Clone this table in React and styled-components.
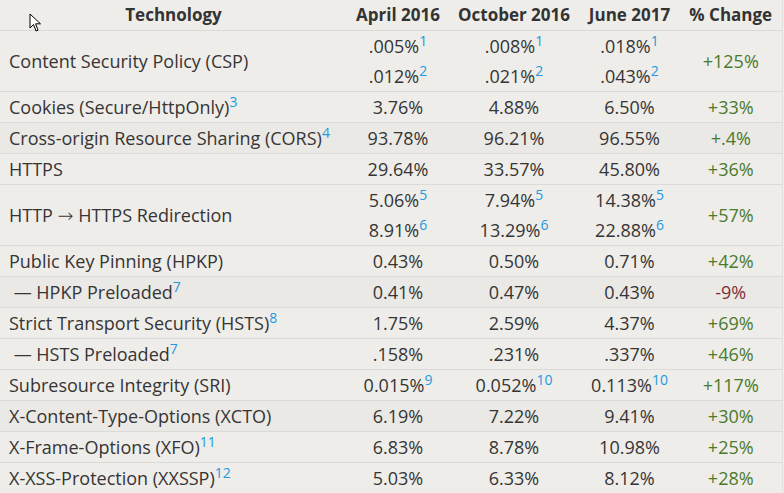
import styled, { createGlobalStyle } from "styled-components";

const GlobalStyle = createGlobalStyle`
  html, body {
    margin: 0;
    padding: 0;
    background: #efede9;
  }
  body {
    font-family: "Open Sans", "Liberation Sans", sans-serif;
    color: #353535;
  }
`;

const Page = styled.div`
  position: relative;
  width: 784px;
  height: 493px;
  overflow: hidden;
`;

const Table = styled.table`
  width: 782px;
  border-collapse: collapse;
  table-layout: fixed;
  font-size: 18px;
  border-right: 1px solid #e3e1dd;

  td, th {
    padding: 0;
  }
`;

const Th = styled.th`
  font-weight: 700;
  font-size: 17px;
  text-align: center;
  line-height: 30px;
  height: 30px;
  color: #333;
  white-space: nowrap;
  border-bottom: 1px solid #dcdad6;
`;

const Row = styled.tr`
  border-bottom: 1px solid #dcdad6;
  background: ${(p) => (p.$dark ? "#ebe9e5" : "transparent")};
`;

const Name = styled.td`
  text-align: left;
  padding-left: 9px !important;
  line-height: 30px;
  height: 30px;
  white-space: nowrap;
`;

const Arrow = styled.span`
  font-family: "DejaVu Sans", sans-serif;
  font-size: 19px;
  font-weight: 300;
`;

const Val = styled.td`
  text-align: center;
  line-height: 30px;
  white-space: nowrap;
`;

const Line = styled.div`
  line-height: 30px;
  height: 30px;
`;

const Change = styled.td`
  text-align: center;
  line-height: 30px;
  color: ${(p) => (p.$neg ? "#7e2f35" : "#4a7a2c")};
`;

const Sup = styled.sup`
  color: #2299e0;
  font-size: 14px;
  line-height: 0;
  vertical-align: 0;
  position: relative;
  top: -7px;
`;

const Cursor = styled.svg`
  position: absolute;
  left: 29px;
  top: 13px;
`;

const cols = [347, 102, 130, 101, 102];

const rows = [
  {
    name: "Content Security Policy (CSP)",
    vals: [
      [[".005%", "1"], [".012%", "2"]],
      [[".008%", "1"], [".021%", "2"]],
      [[".018%", "1"], [".043%", "2"]],
    ],
    change: "+125%",
  },
  { name: "Cookies (Secure/HttpOnly)", note: "3", vals: [[["3.76%"]], [["4.88%"]], [["6.50%"]]], change: "+33%" },
  { name: "Cross-origin Resource Sharing (CORS)", note: "4", vals: [[["93.78%"]], [["96.21%"]], [["96.55%"]]], change: "+.4%" },
  { name: "HTTPS", vals: [[["29.64%"]], [["33.57%"]], [["45.80%"]]], change: "+36%" },
  {
    name: (
      <>
        HTTP <Arrow>{"\u2192"}</Arrow> HTTPS Redirection
      </>
    ),
    vals: [
      [["5.06%", "5"], ["8.91%", "6"]],
      [["7.94%", "5"], ["13.29%", "6"]],
      [["14.38%", "5"], ["22.88%", "6"]],
    ],
    change: "+57%",
  },
  { name: "Public Key Pinning (HPKP)", vals: [[["0.43%"]], [["0.50%"]], [["0.71%"]]], change: "+42%" },
  { name: "\u00a0\u2014 HPKP Preloaded", note: "7", vals: [[["0.41%"]], [["0.47%"]], [["0.43%"]]], change: "-9%", neg: true },
  { name: "Strict Transport Security (HSTS)", note: "8", vals: [[["1.75%"]], [["2.59%"]], [["4.37%"]]], change: "+69%" },
  { name: "\u00a0\u2014 HSTS Preloaded", note: "7", vals: [[[".158%"]], [[".231%"]], [[".337%"]]], change: "+46%" },
  { name: "Subresource Integrity (SRI)", vals: [[["0.015%", "9"]], [["0.052%", "10"]], [["0.113%", "10"]]], change: "+117%" },
  { name: "X-Content-Type-Options (XCTO)", vals: [[["6.19%"]], [["7.22%"]], [["9.41%"]]], change: "+30%" },
  { name: "X-Frame-Options (XFO)", note: "11", vals: [[["6.83%"]], [["8.78%"]], [["10.98%"]]], change: "+25%" },
  { name: "X-XSS-Protection (XXSSP)", note: "12", vals: [[["5.03%"]], [["6.33%"]], [["8.12%"]]], change: "+28%" },
];

const Cell = ({ lines }) => (
  <Val>
    {lines.length > 1 ? (
      lines.map(([v, n], i) => (
        <Line key={i}>
          {v}
          {n && <Sup>{n}</Sup>}
        </Line>
      ))
    ) : (
      <>
        {lines[0][0]}
        {lines[0][1] && <Sup>{lines[0][1]}</Sup>}
      </>
    )}
  </Val>
);

export default function App() {
  return (
    <Page>
      <GlobalStyle />
      <Table>
        <colgroup>
          {cols.map((w, i) => (
            <col key={i} style={{ width: w }} />
          ))}
        </colgroup>
        <thead>
          <tr>
            <Th>Technology</Th>
            <Th>April 2016</Th>
            <Th>October 2016</Th>
            <Th>June 2017</Th>
            <Th>% Change</Th>
          </tr>
        </thead>
        <tbody>
          {rows.map((r, i) => (
            <Row key={i} $dark={i % 4 === 2}>
              <Name>
                {r.name}
                {r.note && <Sup>{r.note}</Sup>}
              </Name>
              {r.vals.map((v, j) => (
                <Cell key={j} lines={v} />
              ))}
              <Change $neg={r.neg}>{r.change}</Change>
            </Row>
          ))}
        </tbody>
      </Table>
      <Cursor width="13" height="20" viewBox="0 0 13 20">
        <path
          d="M1 1 L1 15 L4.5 11.5 L7 18 L9 17.2 L6.6 10.8 L11.5 10.8 Z"
          fill="#fff"
          stroke="#000"
          strokeWidth="1"
          strokeLinejoin="round"
        />
      </Cursor>
    </Page>
  );
}
